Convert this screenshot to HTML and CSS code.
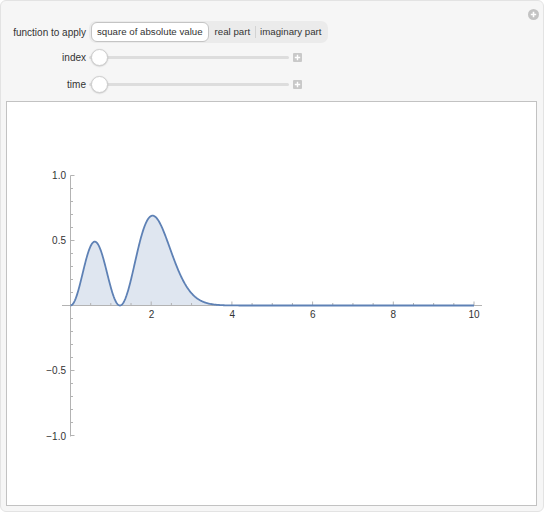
FILE: index.html
```html
<!DOCTYPE html>
<html>
<head>
<meta charset="utf-8">
<link rel="stylesheet" href="styles.css">
</head>
<body>
<div class="panel">
  <span class="corner-btn">
    <svg width="11" height="11" viewBox="0 0 11 11"><circle cx="5.5" cy="5.5" r="5.5" fill="#c3c3c3"/><path d="M5.5 2.8v5.4M2.8 5.5h5.4" stroke="#fff" stroke-width="1.6"/></svg>
  </span>
  <div class="controls">
    <div class="row row-seg">
      <div class="label">function to apply</div>
      <div class="seg">
        <span class="seg-item sel">square of absolute value</span>
        <span class="seg-item real">real part</span>
        <span class="sep"></span>
        <span class="seg-item imag">imaginary part</span>
      </div>
    </div>
    <div class="row row-slider first">
      <div class="label">index</div>
      <div class="slider">
        <div class="track-wrap"><span class="track"></span><span class="thumb"></span></div>
        <span class="plus"><svg width="9" height="9" viewBox="0 0 9 9"><path d="M4.5 1.8v5.4M1.8 4.5h5.4" stroke="#fff" stroke-width="1.4"/></svg></span>
      </div>
    </div>
    <div class="row row-slider second">
      <div class="label">time</div>
      <div class="slider">
        <div class="track-wrap"><span class="track"></span><span class="thumb"></span></div>
        <span class="plus"><svg width="9" height="9" viewBox="0 0 9 9"><path d="M4.5 1.8v5.4M1.8 4.5h5.4" stroke="#fff" stroke-width="1.4"/></svg></span>
      </div>
    </div>
  </div>
  <div class="plot">
    <svg class="chart" width="529" height="403" viewBox="7 102 529 403">
      <path id="fill" fill="#5e81b5" fill-opacity="0.2" d=""/>
      <path id="axes" stroke="#b3b3b3" stroke-width="1" fill="none" d="M62 305.5H482M70.5 175.5V436.5"/>
      <path id="ticks" stroke="#b3b3b3" stroke-width="1" fill="none" d=""/>
      <path id="curve" stroke="#5e81b5" stroke-width="1.8" fill="none" stroke-linejoin="round" d=""/>
      <g class="xl">
        <text x="151.6" y="318">2</text>
        <text x="232.2" y="318">4</text>
        <text x="312.8" y="318">6</text>
        <text x="393.4" y="318">8</text>
        <text x="474" y="318">10</text>
      </g>
      <g class="yl">
        <text x="66" y="179">1.0</text>
        <text x="66" y="244">0.5</text>
        <text x="66" y="374">−0.5</text>
        <text x="66" y="439.5">−1.0</text>
      </g>
    </svg>
  </div>
</div>
<script src="script.js"></script>
</body>
</html>
```
FILE: styles.css
```css
html, body {
  margin: 0;
  padding: 0;
  background: #ffffff;
}
body {
  font-family: "Liberation Sans", Arial, sans-serif;
  font-size: 10px;
  color: #333333;
}
.panel {
  position: relative;
  box-sizing: border-box;
  width: 544px;
  height: 512px;
  background: #f6f6f6;
  border: 1px solid #e3e3e3;
  border-radius: 6px;
  padding: 20px 6px 5px 5px;
  display: flex;
  flex-direction: column;
}
.corner-btn {
  position: absolute;
  top: 7.5px;
  right: 4.5px;
  width: 11px;
  height: 11px;
  display: block;
}
.corner-btn svg { display: block; }
.controls {
  display: flex;
  flex-direction: column;
  padding-left: 5px;
}
.row {
  display: flex;
  align-items: center;
  gap: 3px;
}
.row-seg { height: 22px; }
.row-slider { height: 18px; }
.row-slider.first { margin-top: 5px; }
.row-slider.second { margin-top: 9px; }
.label {
  width: 75px;
  text-align: right;
  white-space: nowrap;
  flex: none;
}
.seg {
  display: flex;
  align-items: center;
  height: 22px;
  box-sizing: border-box;
  background: #ebebeb;
  border-radius: 7px;
  padding: 1px 2px 1px 2px;
  font-size: 9.7px;
}
.seg-item {
  white-space: nowrap;
  line-height: 20px;
  height: 20px;
}
.seg-item.sel {
  box-sizing: border-box;
  background: #ffffff;
  border: 1px solid #c4c4c4;
  border-radius: 6px;
  padding: 0 5px;
  line-height: 18px;
  min-width: 117px;
  text-align: center;
}
.seg-item.real { padding: 0 5px 0 6px; }
.seg-item.imag { padding: 0 4px 0 4px; }
.sep {
  width: 1px;
  height: 12px;
  background: #d3d3d3;
}
.slider {
  display: flex;
  align-items: center;
  height: 18px;
}
.track-wrap {
  position: relative;
  width: 200px;
  height: 18px;
  display: flex;
  align-items: center;
}
.track {
  display: block;
  width: 100%;
  height: 3px;
  border-radius: 2px;
  background: #dddddd;
}
.thumb {
  position: absolute;
  left: 1.5px;
  top: 0.5px;
  width: 17px;
  height: 17px;
  box-sizing: border-box;
  border-radius: 50%;
  background: #ffffff;
  border: 0.5px solid #cfcfcf;
  box-shadow: 0 0.5px 1.5px rgba(0, 0, 0, 0.22);
}
.plus {
  margin-left: 4px;
  width: 9px;
  height: 9px;
  background: #c9c9c9;
  border-radius: 1px;
  display: block;
}
.plus svg { display: block; }
.plot {
  margin-top: 8px;
  box-sizing: border-box;
  width: 531px;
  height: 405px;
  background: #ffffff;
  border: 1px solid #c2c2c2;
}
.chart { display: block; }
.chart text {
  font-family: "Liberation Sans", Arial, sans-serif;
  font-size: 10px;
  fill: #333333;
}
.xl text { text-anchor: middle; }
.yl text { text-anchor: end; }
```
FILE: script.js
```js
(function () {
  var X0 = 70.5, SX = 40.35, Y0 = 305.5, SY = 130;
  function f(x) {
    var h = 8 * x * x * x - 12 * x;
    return h * h * Math.exp(-x * x) / (24 * Math.sqrt(Math.PI));
  }
  var pts = [];
  for (var i = 0; i <= 1000; i++) {
    var x = i / 100;
    pts.push((X0 + SX * x).toFixed(2) + ' ' + (Y0 - SY * f(x)).toFixed(2));
  }
  var line = 'M' + pts.join('L');
  document.getElementById('curve').setAttribute('d', line);
  document.getElementById('fill').setAttribute('d', line + 'L' + (X0 + SX * 10).toFixed(2) + ' ' + Y0 + 'L' + X0 + ' ' + Y0 + 'Z');
  var t = '';
  for (var k = 1; k <= 20; k++) {
    var xx = X0 + SX * k * 0.5;
    var len = (k % 4 === 0) ? 4 : 2.5;
    t += 'M' + xx.toFixed(2) + ' ' + Y0 + 'V' + (Y0 - len);
  }
  for (var j = -10; j <= 10; j++) {
    if (j === 0) continue;
    var yy = Y0 - SY * j * 0.1;
    var l2 = (j % 5 === 0) ? 4 : 2.5;
    t += 'M' + X0 + ' ' + yy.toFixed(2) + 'H' + (X0 + l2);
  }
  document.getElementById('ticks').setAttribute('d', t);
})();
```
